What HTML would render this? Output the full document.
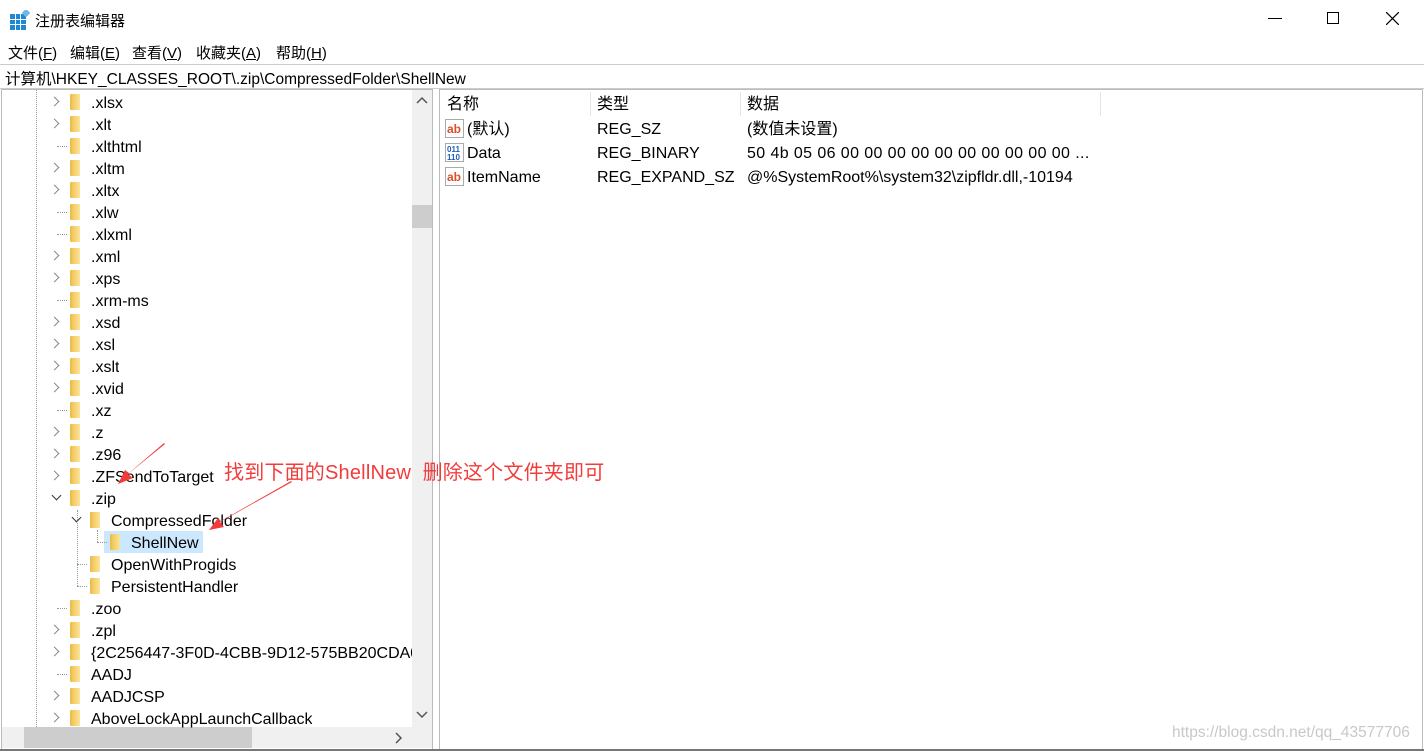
<!DOCTYPE html>
<html><head><meta charset="utf-8"><style>
*{margin:0;padding:0;box-sizing:border-box}
body{width:1424px;height:751px;background:#fff;font-family:"Liberation Sans","Noto Sans CJK SC",sans-serif;font-size:15px;color:#000;position:relative;overflow:hidden}
.a{position:absolute;white-space:nowrap}
.t{font-size:16px;line-height:20px}
.fold{position:absolute;width:10px;height:16px;background:linear-gradient(90deg,#e8b84a 0,#f4cf6a 40%,#fbe39a 100%);border-radius:1px}
.chev{position:absolute;width:7px;height:7px;border-right:1.5px solid #888;border-bottom:1.5px solid #888;transform:rotate(-45deg)}
.chev.d{transform:rotate(45deg);border-color:#333}
.dot{position:absolute;border-color:#999;border-style:dotted;border-width:0}
</style></head><body>
<svg class="a" style="left:10px;top:10px" width="20" height="20" viewBox="0 0 20 20"><rect x="0" y="4" width="16" height="16" fill="#1e88d6"/><g stroke="#fff" stroke-width="1"><line x1="0" y1="9.5" x2="16" y2="9.5"/><line x1="0" y1="14.5" x2="16" y2="14.5"/><line x1="5.5" y1="4" x2="5.5" y2="20"/><line x1="10.5" y1="4" x2="10.5" y2="20"/></g><rect x="13" y="0" width="6" height="6" fill="#6fb6ea" transform="rotate(45 16 3)"/></svg>
<div class="a" style="left:35px;top:10px;font-size:15px">注册表编辑器</div>
<div class="a" style="left:1268px;top:18px;width:14px;height:1px;background:#000"></div>
<div class="a" style="left:1327px;top:12px;width:12px;height:12px;border:1px solid #000"></div>
<svg class="a" style="left:1386px;top:12px" width="13" height="13"><path d="M0 0L13 13M13 0L0 13" stroke="#000" stroke-width="1.2"/></svg>
<div class="a" style="left:8px;top:42px">文件(<u>F</u>)</div>
<div class="a" style="left:70px;top:42px">编辑(<u>E</u>)</div>
<div class="a" style="left:132px;top:42px">查看(<u>V</u>)</div>
<div class="a" style="left:196px;top:42px">收藏夹(<u>A</u>)</div>
<div class="a" style="left:276px;top:42px">帮助(<u>H</u>)</div>
<div class="a" style="left:0;top:64px;width:1424px;height:25px;border-top:1px solid #ccc;border-bottom:1px solid #ccc"></div>
<div class="a" style="left:5px;top:67px;font-size:15.5px">计算机\HKEY_CLASSES_ROOT\.zip\CompressedFolder\ShellNew</div>
<div class="a" style="left:1px;top:89px;width:432px;height:661px;border:1px solid #bbb"></div>
<div class="a" style="left:439px;top:89px;width:984px;height:661px;border:1px solid #bbb"></div>
<div class="a" style="left:0;top:749px;width:1424px;height:2px;background:#777"></div>
<div class="a" style="left:412px;top:90px;width:20px;height:637px;background:#f0f0f0"></div>
<div class="a" style="left:412px;top:205px;width:20px;height:23px;background:#cdcdcd"></div>
<svg class="a" style="left:416px;top:96px" width="12" height="8"><path d="M1 7L6 2L11 7" stroke="#555" stroke-width="1.5" fill="none"/></svg>
<svg class="a" style="left:416px;top:711px" width="12" height="8"><path d="M1 1L6 6L11 1" stroke="#555" stroke-width="1.5" fill="none"/></svg>
<div class="a" style="left:2px;top:727px;width:410px;height:21px;background:#f0f0f0"></div>
<div class="a" style="left:24px;top:727px;width:228px;height:21px;background:#cdcdcd"></div>
<svg class="a" style="left:395px;top:732px" width="8" height="12"><path d="M1 1L6 6L1 11" stroke="#555" stroke-width="1.5" fill="none"/></svg>
<div class="a" style="left:412px;top:727px;width:20px;height:21px;background:#f0f0f0"></div>
<div class="a" style="left:104px;top:531px;width:99px;height:22px;background:#cce8ff"></div>
<div id="tree"></div>
<script>
var rows=[
[0,'.xlsx',1],[0,'.xlt',1],[0,'.xlthtml',0],[0,'.xltm',1],[0,'.xltx',1],[0,'.xlw',0],[0,'.xlxml',0],[0,'.xml',1],[0,'.xps',1],[0,'.xrm-ms',0],[0,'.xsd',1],[0,'.xsl',1],[0,'.xslt',1],[0,'.xvid',1],[0,'.xz',0],[0,'.z',1],[0,'.z96',1],[0,'.ZFSendToTarget',1],[0,'.zip',2],[1,'CompressedFolder',2],[2,'ShellNew',0],[1,'OpenWithProgids',0],[1,'PersistentHandler',0],[0,'.zoo',0],[0,'.zpl',1],[0,'{2C256447-3F0D-4CBB-9D12-575BB20CDA0A}',1],[0,'AADJ',0],[0,'AADJCSP',1],[0,'AboveLockAppLaunchCallback',1]];
var h='';
h+='<div class="dot" style="left:36px;top:90px;height:637px;border-left-width:1px"></div>';
rows.forEach(function(r,i){
var cy=102+i*22, lv=r[0], ox=lv*20;
if(r[2]==1) h+='<div class="chev" style="left:'+(51+ox)+'px;top:'+(cy-4)+'px"></div>';
else if(r[2]==2) h+='<div class="chev d" style="left:'+(53+ox)+'px;top:'+(cy-6)+'px"></div>';
else h+='<div class="dot" style="left:'+(57+ox)+'px;top:'+cy+'px;width:10px;border-top-width:1px"></div>';
h+='<div class="fold" style="left:'+(70+ox)+'px;top:'+(cy-8)+'px"></div>';
h+='<div class="a t" style="left:'+(91+ox)+'px;top:'+(cy-8)+'px;max-width:'+(321-ox)+'px;overflow:hidden">'+r[1]+'</div>';
});
h+='<div class="dot" style="left:97px;top:530px;height:12px;border-left-width:1px"></div>';
h+='<div class="dot" style="left:77px;top:510px;height:76px;border-left-width:1px"></div>';
document.getElementById('tree').innerHTML=h;
</script>
<div class="a t" style="left:447px;top:95px">名称</div>
<div class="a t" style="left:597px;top:95px">类型</div>
<div class="a t" style="left:747px;top:95px">数据</div>
<div class="a" style="left:590px;top:92px;width:1px;height:24px;background:#e5e5e5"></div>
<div class="a" style="left:740px;top:92px;width:1px;height:24px;background:#e5e5e5"></div>
<div class="a" style="left:1100px;top:92px;width:1px;height:24px;background:#e5e5e5"></div>
<svg class="a" style="left:445px;top:119px" width="20" height="20"><rect x="0.5" y="0.5" width="18" height="18" fill="#fff" stroke="#aaa"/><text x="2" y="14" font-size="12" font-weight="bold" fill="#d9502b" font-family="Liberation Sans">ab</text></svg>
<svg class="a" style="left:445px;top:143px" width="20" height="20"><rect x="0.5" y="0.5" width="18" height="18" fill="#fff" stroke="#aaa"/><text x="2" y="9" font-size="8" font-weight="bold" fill="#1d5fb8" font-family="Liberation Sans">011</text><text x="2" y="17" font-size="8" font-weight="bold" fill="#1d5fb8" font-family="Liberation Sans">110</text></svg>
<svg class="a" style="left:445px;top:167px" width="20" height="20"><rect x="0.5" y="0.5" width="18" height="18" fill="#fff" stroke="#aaa"/><text x="2" y="14" font-size="12" font-weight="bold" fill="#d9502b" font-family="Liberation Sans">ab</text></svg>
<div class="a t" style="left:467px;top:120px">(默认)</div>
<div class="a t" style="left:467px;top:144px">Data</div>
<div class="a t" style="left:467px;top:168px">ItemName</div>
<div class="a t" style="left:597px;top:120px">REG_SZ</div>
<div class="a t" style="left:597px;top:144px">REG_BINARY</div>
<div class="a t" style="left:597px;top:168px">REG_EXPAND_SZ</div>
<div class="a t" style="left:747px;top:120px">(数值未设置)</div>
<div class="a t" style="left:747px;top:144px;letter-spacing:0.4px">50 4b 05 06 00 00 00 00 00 00 00 00 00 00 ...</div>
<div class="a t" style="left:747px;top:168px">@%SystemRoot%\system32\zipfldr.dll,-10194</div>
<div class="a" style="left:224px;top:456px;font-size:20px;color:#f23c3c;letter-spacing:0.2px">找到下面的ShellNew&nbsp;&nbsp;删除这个文件夹即可</div>
<svg class="a" style="left:0;top:0" width="440" height="600"><g fill="#f23c3c"><path d="M165 444L128 474L133 478L118 484L125 470L129 473L164 443Z"/><path d="M292 482L220 522L224 527L209 530L218 518L221 521L291 481Z"/></g></svg>
<div class="a" style="left:1172px;top:724px;font-size:15.5px;color:#c8c8c8">https://blog.csdn.net/qq_43577706</div>
</body></html>
